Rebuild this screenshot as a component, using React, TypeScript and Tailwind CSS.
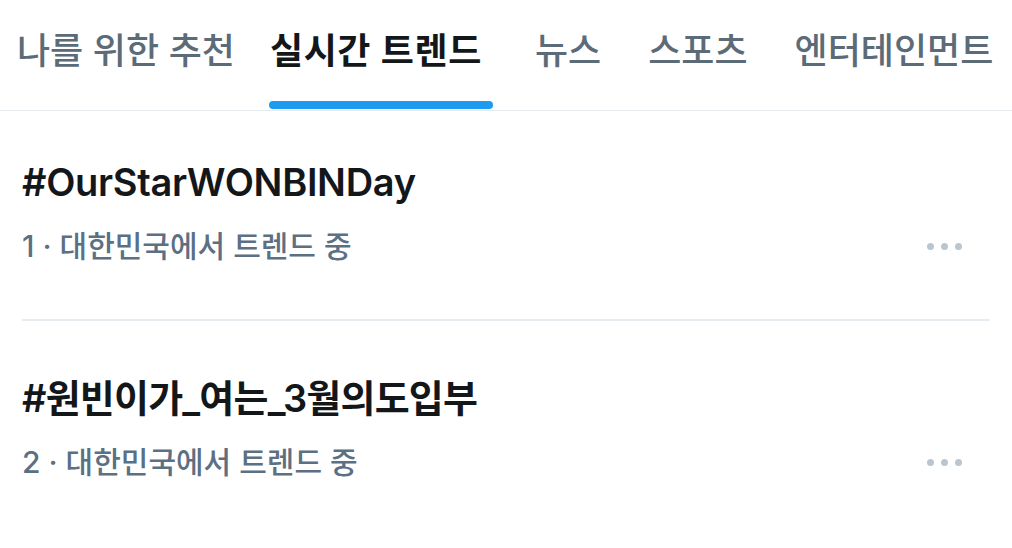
import React from 'react';

const tabs = ['나를 위한 추천', '실시간 트렌드', '뉴스', '스포츠', '엔터테인먼트'];
const tabGaps = ['mr-[35px]', 'mr-[53px]', 'mr-[47px]', 'mr-[47px]', ''];

const trends = [
  { rank: 1, tag: '#OurStarWONBINDay', track: 'tracking-[-0.3px]' },
  { rank: 2, tag: '#원빈이가_여는_3월의도입부', track: 'tracking-[-0.8px]' },
];

const font = "font-['Inter','Noto_Sans_CJK_KR',sans-serif]";

function Dots() {
  return (
    <div className="flex gap-[7px] mr-[28px]">
      <span className="w-[7px] h-[7px] rounded-full bg-[#bac6cf]" />
      <span className="w-[7px] h-[7px] rounded-full bg-[#bac6cf]" />
      <span className="w-[7px] h-[7px] rounded-full bg-[#bac6cf]" />
    </div>
  );
}

export default function App() {
  return (
    <div className={`w-[1012px] h-[548px] bg-white overflow-hidden ${font}`}>
      {/* Tabs */}
      <div className="flex h-[111px] border-b border-[#e6ecf0] pl-[17px]">
        {tabs.map((t, i) => {
          const active = i === 1;
          return (
            <div key={t} className={`relative flex flex-col h-full pt-[27px] ${tabGaps[i]}`}>
              <span
                className={`text-[36px] leading-[48px] whitespace-nowrap ${
                  active ? 'text-[#14171a] font-semibold tracking-[0.6px]' : 'text-[#5b6b78] font-medium'
                }`}
              >
                {t}
              </span>
              {active && (
                <div className="absolute left-[-1px] right-[-11px] bottom-[1px] h-[8px] rounded-full bg-[#1d9bf0]" />
              )}
            </div>
          );
        })}
      </div>

      {/* Trends */}
      <div className="px-[22px]">
        {trends.map((t, i) => (
          <div
            key={t.rank}
            className={`flex flex-col ${
              i === 0 ? 'pt-[48px] pb-[54px] border-b-2 border-[#e6ecf0]' : 'pt-[54px]'
            }`}
          >
            <span className={`text-[38px] leading-[46px] font-semibold text-[#14171a] ${t.track}`}>
              {t.tag}
            </span>
            <div className="mt-[22px] flex items-center justify-between">
              <span className="text-[30px] leading-[38px] font-medium text-[#5b7083]">
                {t.rank} · 대한민국에서 트렌드 중
              </span>
              <Dots />
            </div>
          </div>
        ))}
      </div>
    </div>
  );
}
